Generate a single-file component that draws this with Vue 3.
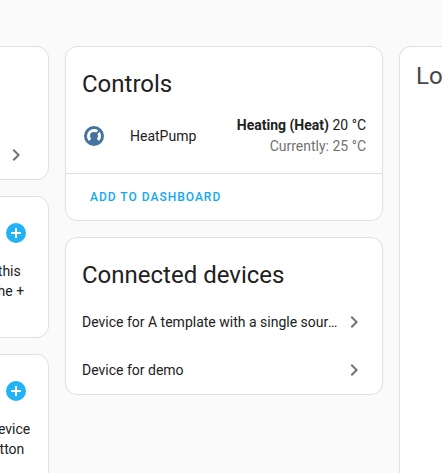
<script setup>
const chevron = 'M8.59,16.58L13.17,12L8.59,7.41L10,6L16,12L10,18L8.59,16.58Z'
const plusCircle =
  'M17,13H13V17H11V13H7V11H11V7H13V11H17M12,2A10,10 0 0,0 2,12A10,10 0 0,0 12,22A10,10 0 0,0 22,12A10,10 0 0,0 12,2Z'
const thermostat =
  'M16.95,16.95L14.83,14.83C15.55,14.1 16,13.1 16,12C16,11.26 15.79,10.57 15.43,10L17.6,7.81C18.5,9 19,10.43 19,12C19,13.93 18.22,15.68 16.95,16.95M12,5C13.57,5 15,5.5 16.19,6.4L14,8.56C13.43,8.21 12.74,8 12,8A4,4 0 0,0 8,12C8,13.1 8.45,14.1 9.17,14.83L7.05,16.95C5.78,15.68 5,13.93 5,12A7,7 0 0,1 12,5M12,2A10,10 0 0,0 2,12A10,10 0 0,0 12,22A10,10 0 0,0 22,12A10,10 0 0,0 12,2Z'

const related = [
  {
    label: 'Add automation',
    text: 'No automations have been added using this device yet. You can add one by clicking the + button above.',
  },
  {
    label: 'Add scene',
    text: 'No scenes have been added using this device yet. You can add one by clicking the + button above.',
  },
]
const devices = ['Device for A template with a single source', 'Device for demo']
</script>

<template>
  <main class="page">
    <div class="column side">
      <section class="card info">
        <a class="info-link" href="#" aria-label="Open integration">
          <svg class="icon muted" viewBox="0 0 24 24"><path :d="chevron" /></svg>
        </a>
      </section>
      <section v-for="item in related" :key="item.label" class="card">
        <div class="related-header">
          <button class="add" type="button" :aria-label="item.label">
            <svg class="icon" viewBox="0 0 24 24"><path fill-rule="evenodd" :d="plusCircle" /></svg>
          </button>
        </div>
        <p class="related-text">{{ item.text }}</p>
      </section>
    </div>

    <div class="column">
      <section class="card">
        <h1 class="title">Controls</h1>
        <div class="entity">
          <svg class="icon state" viewBox="0 0 24 24"><path fill-rule="evenodd" :d="thermostat" /></svg>
          <span class="name">HeatPump</span>
          <div class="climate">
            <div><b>Heating (Heat)</b> 20 °C</div>
            <div class="current">Currently: 25 °C</div>
          </div>
        </div>
        <div class="actions">
          <button class="text-button" type="button">Add to dashboard</button>
        </div>
      </section>

      <section class="card">
        <h1 class="title">Connected devices</h1>
        <a v-for="device in devices" :key="device" class="device" href="#">
          <span class="device-name">{{ device }}</span>
          <svg class="icon muted" viewBox="0 0 24 24"><path :d="chevron" /></svg>
        </a>
      </section>
    </div>

    <div class="column">
      <section class="card logbook">
        <h1 class="logbook-title">Logbook</h1>
      </section>
    </div>
  </main>
</template>

<style>
body {
  background: #fafafa;
}
</style>

<style scoped>
.page {
  box-sizing: border-box;
  display: grid;
  grid-template-columns: 49px minmax(0, 1fr) 43px;
  gap: 16px;
  height: 100vh;
  padding-top: 46px;
  overflow: hidden;
  font-family: Roboto, sans-serif;
  font-size: 14px;
  line-height: 20px;
  color: #212121;
}
.column {
  display: flex;
  flex-direction: column;
  gap: 16px;
  min-width: 0;
}
.side {
  align-items: flex-end;
}
.card {
  box-sizing: border-box;
  flex: none;
  background: #fff;
  border: 1px solid #e0e0e0;
  border-radius: 12px;
}
.side .card {
  width: 318px;
}
.icon {
  display: block;
  flex: none;
  width: 24px;
  height: 24px;
  fill: currentColor;
}
.muted {
  color: #727272;
}
.info {
  padding-top: 84px;
}
.info-link {
  display: flex;
  align-items: center;
  justify-content: flex-end;
  height: 48px;
  padding-right: 20px;
}
.related-header {
  display: flex;
  justify-content: flex-end;
  padding: 24px 20px 16px;
}
.add {
  padding: 0;
  border: 0;
  background: none;
  color: #21b3f5;
}
.related-text {
  margin: 0;
  padding: 0 16px 16px;
}
.title {
  margin: 0;
  padding: 14px 16px 0;
  font-size: 24px;
  font-weight: 400;
  line-height: 46px;
}
.entity {
  display: flex;
  align-items: center;
  padding: 8px 16px 16px;
}
.state {
  color: #44739e;
}
.name {
  flex: 1;
  padding-left: 24px;
}
.climate {
  text-align: right;
  line-height: 21px;
}
.current {
  color: #727272;
}
.actions {
  padding: 5px 16px;
  border-top: 1px solid #e0e0e0;
}
.text-button {
  height: 36px;
  padding: 0 8px;
  border: 0;
  background: none;
  color: #12a9f4;
  font-family: inherit;
  font-size: 12px;
  font-weight: 500;
  letter-spacing: 1px;
  text-transform: uppercase;
}
.device {
  display: flex;
  align-items: center;
  gap: 4px;
  height: 48px;
  padding: 0 16px;
  color: inherit;
  text-decoration: none;
}
.device-name {
  flex: 1;
  overflow: hidden;
  text-overflow: ellipsis;
  white-space: nowrap;
}
.logbook {
  flex: 1;
  border-right: 0;
  border-bottom: 0;
  border-radius: 12px 0 0 0;
  overflow: hidden;
}
.logbook-title {
  margin: 0;
  padding: 13px 16px;
  font-size: 24px;
  font-weight: 400;
  line-height: 32px;
  color: #484848;
}
</style>
